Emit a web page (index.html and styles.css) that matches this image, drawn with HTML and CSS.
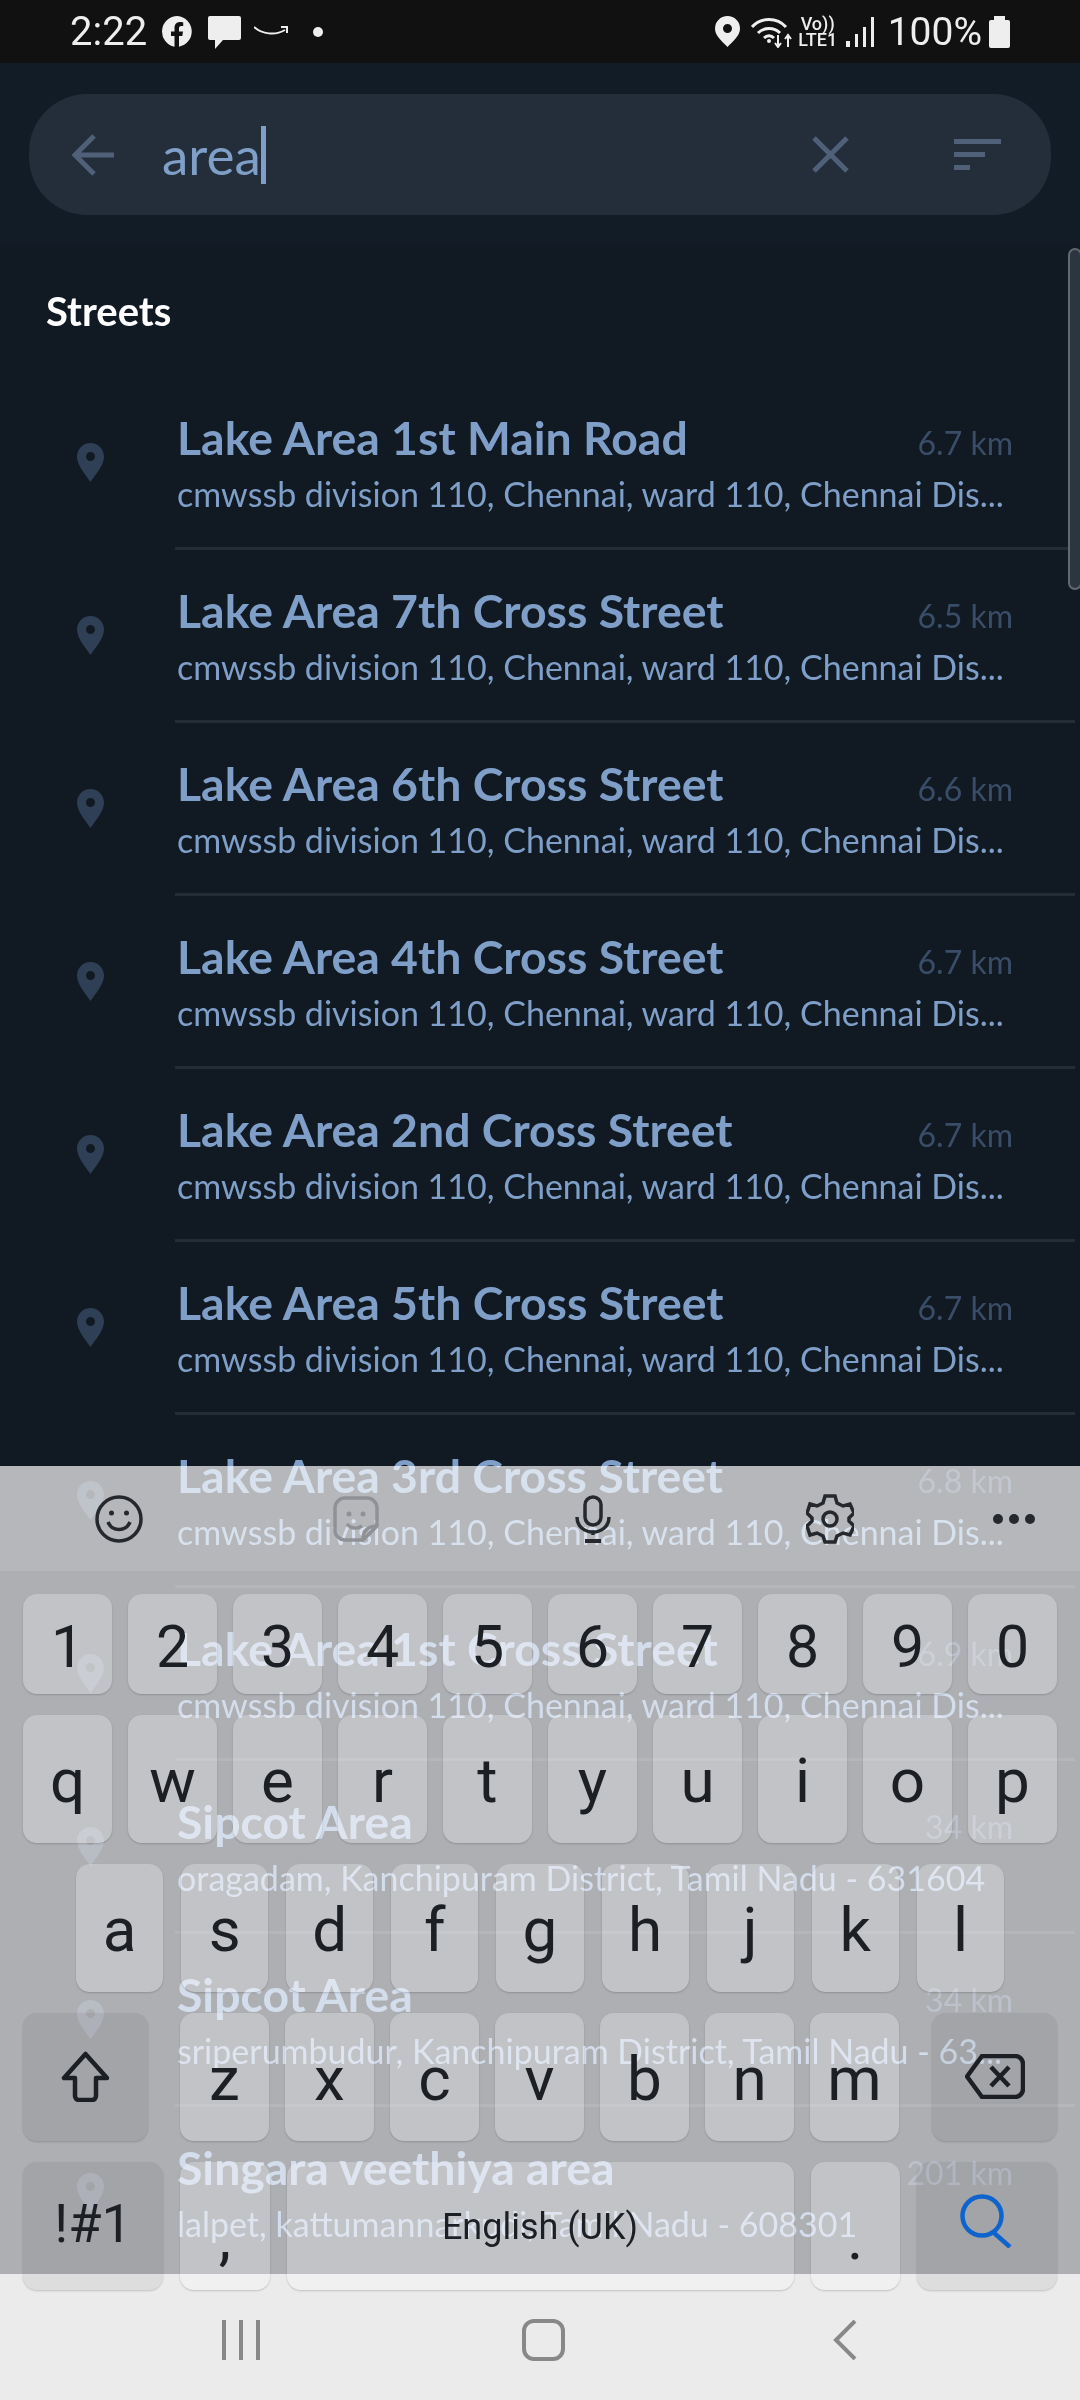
FILE: index.html
```html
<!DOCTYPE html>
<html lang="en">
<head>
    <meta charset="UTF-8">
    <meta name="viewport" content="width=device-width, initial-scale=1.0">
    <title>Search</title>
    <link rel="stylesheet" href="styles.css">
</head>
<body>

<svg class="defs" width="0" height="0">
    <symbol id="pin" viewBox="0 0 27 39">
        <path fill-rule="evenodd" d="M13.5 0C6 0 0 6 0 13.5 0 22 8 31 13.5 39 19 31 27 22 27 13.5 27 6 21 0 13.5 0zm0 9a4.5 4.5 0 1 1 0 9 4.5 4.5 0 0 1 0-9z"/>
    </symbol>
</svg>

<div class="phone">
    <div class="status">
        <div class="status-left">
            <span class="time">2:22</span>
            <svg class="ic-fb" width="31" height="31" viewBox="0 0 31 31"><path fill="#eee" d="M15.5 0a15.5 15.5 0 0 0-3 30.7V20H9v-4.500h3.500V12c0-4 2.300-6 5.700-6 1.500 0 3 .3 3 .3v3.700h-1.800c-1.900 0-2.400 1.100-2.400 2.300v3.200h4l-.7 4.500h-3.300v10.700A15.500 15.500 0 0 0 15.500 0z"/></svg>
            <svg class="ic-msg" width="33" height="33" viewBox="0 0 33 33"><path fill="#eee" d="M2 0h29a2 2 0 0 1 2 2v20a2 2 0 0 1-2 2H15l-8 9v-9H2a2 2 0 0 1-2-2V2a2 2 0 0 1 2-2z"/></svg>
            <svg class="ic-smile" width="35" height="12" viewBox="0 0 35 12"><path fill="none" stroke="#eee" stroke-width="2" d="M0 2c8 7 21 9 31 3"/><path fill="none" stroke="#eee" stroke-width="2" d="M27 2h6v6"/></svg>
            <span class="dot"></span>
        </div>
        <div class="status-right">
            <svg class="ic-loc" width="25" height="31" viewBox="0 0 25 31"><path fill="#eee" fill-rule="evenodd" d="M12.500 0C5.500 0 0 5.500 0 12.500 0 20 7 25 12.500 31 18 25 25 20 25 12.500 25 5.500 19.500 0 12.500 0zm0 8a4.500 4.500 0 1 1 0 9 4.500 4.500 0 0 1 0-9z"/></svg>
            <svg class="ic-wifi" width="42" height="32" viewBox="0 0 42 32" fill="none" stroke="#eee" stroke-width="3"><path d="M1 11C10 1 26 1 35 11"/><path d="M7 17c6-6 16-6 22 0"/><path d="M13 22c3-3 7-3 10 0"/><circle cx="18" cy="25" r="2" fill="#eee" stroke="none"/><path stroke-width="2" d="M27 19v11M24 27l3 4 3-4M37 31V20M34 23l3-4 3 4"/></svg>
            <div class="volte"><span>Vo))</span><span>LTE1</span></div>
            <div class="signal"><i></i><i></i><i></i><i></i></div>
            <span class="batt-text">100%</span>
            <div class="battery"></div>
        </div>
    </div>

    <div class="main">
        <div class="top">
            <div class="search">
                <svg class="ic-back" width="42" height="42" viewBox="0 0 42 42" fill="none" stroke="#4f6078" stroke-width="5"><path d="M22 2L3 21l19 19M3 21h39"/></svg>
                <div class="query">area<span class="caret"></span></div>
                <svg class="ic-x" width="37" height="37" viewBox="0 0 37 37" fill="none" stroke="#4f6078" stroke-width="5"><path d="M2 2l33 33M35 2L2 35"/></svg>
                <div class="filter"><i></i><i></i><i></i></div>
            </div>
        </div>

        <div class="results">
            <h2>Streets</h2>
            <div class="scroll-thumb"></div>

            <div class="row">
                <svg class="pin"><use href="#pin"/></svg>
                <div class="row-body">
                    <div class="row-top"><span class="name">Lake Area 1st Main Road</span><span class="dist">6.7 km</span></div>
                    <div class="addr">cmwssb division 110, Chennai, ward 110, Chennai Dis...</div>
                </div>
            </div>
            <div class="row">
                <svg class="pin"><use href="#pin"/></svg>
                <div class="row-body">
                    <div class="row-top"><span class="name">Lake Area 7th Cross Street</span><span class="dist">6.5 km</span></div>
                    <div class="addr">cmwssb division 110, Chennai, ward 110, Chennai Dis...</div>
                </div>
            </div>
            <div class="row">
                <svg class="pin"><use href="#pin"/></svg>
                <div class="row-body">
                    <div class="row-top"><span class="name">Lake Area 6th Cross Street</span><span class="dist">6.6 km</span></div>
                    <div class="addr">cmwssb division 110, Chennai, ward 110, Chennai Dis...</div>
                </div>
            </div>
            <div class="row">
                <svg class="pin"><use href="#pin"/></svg>
                <div class="row-body">
                    <div class="row-top"><span class="name">Lake Area 4th Cross Street</span><span class="dist">6.7 km</span></div>
                    <div class="addr">cmwssb division 110, Chennai, ward 110, Chennai Dis...</div>
                </div>
            </div>
            <div class="row">
                <svg class="pin"><use href="#pin"/></svg>
                <div class="row-body">
                    <div class="row-top"><span class="name">Lake Area 2nd Cross Street</span><span class="dist">6.7 km</span></div>
                    <div class="addr">cmwssb division 110, Chennai, ward 110, Chennai Dis...</div>
                </div>
            </div>
            <div class="row">
                <svg class="pin"><use href="#pin"/></svg>
                <div class="row-body">
                    <div class="row-top"><span class="name">Lake Area 5th Cross Street</span><span class="dist">6.7 km</span></div>
                    <div class="addr">cmwssb division 110, Chennai, ward 110, Chennai Dis...</div>
                </div>
            </div>
            <div class="row">
                <svg class="pin"><use href="#pin"/></svg>
                <div class="row-body">
                    <div class="row-top"><span class="name">Lake Area 3rd Cross Street</span><span class="dist">6.8 km</span></div>
                    <div class="addr">cmwssb division 110, Chennai, ward 110, Chennai Dis...</div>
                </div>
            </div>
            <div class="row">
                <svg class="pin"><use href="#pin"/></svg>
                <div class="row-body">
                    <div class="row-top"><span class="name">Lake Area 1st Cross Street</span><span class="dist">6.9 km</span></div>
                    <div class="addr">cmwssb division 110, Chennai, ward 110, Chennai Dis...</div>
                </div>
            </div>
            <div class="row">
                <svg class="pin"><use href="#pin"/></svg>
                <div class="row-body">
                    <div class="row-top"><span class="name">Sipcot Area</span><span class="dist">34 km</span></div>
                    <div class="addr">oragadam, Kanchipuram District, Tamil Nadu - 631604</div>
                </div>
            </div>
            <div class="row">
                <svg class="pin"><use href="#pin"/></svg>
                <div class="row-body">
                    <div class="row-top"><span class="name">Sipcot Area</span><span class="dist">34 km</span></div>
                    <div class="addr">sriperumbudur, Kanchipuram District, Tamil Nadu - 63...</div>
                </div>
            </div>
            <div class="row">
                <svg class="pin"><use href="#pin"/></svg>
                <div class="row-body">
                    <div class="row-top"><span class="name">Singara veethiya area</span><span class="dist">201 km</span></div>
                    <div class="addr">lalpet, kattumannarkudi, Tamil Nadu - 608301</div>
                </div>
            </div>
        </div>
    </div>

    <div class="navbar">
        <div class="nav-recent"><i></i><i></i><i></i></div>
        <div class="nav-home"></div>
        <svg class="nav-back" width="24" height="40" viewBox="0 0 24 40" fill="none" stroke="#888" stroke-width="4"><path d="M22 1L3 20l19 19"/></svg>
    </div>

    <!-- keyboard sits on top of the list, the list shows through it -->
    <div class="keyboard">
        <div class="kb-bg"></div>
        <div class="kb-tools">
            <svg width="48" height="48" viewBox="0 0 48 48" fill="none" stroke="#25282c" stroke-width="3.500"><circle cx="24" cy="24" r="22"/><path d="M13 27c4 10 18 10 22 0"/><circle cx="16.500" cy="18" r="2.500" fill="#25282c" stroke="none"/><circle cx="31.500" cy="18" r="2.500" fill="#25282c" stroke="none"/></svg>
            <svg width="46" height="46" viewBox="0 0 46 46" fill="none" stroke="#8f9196" stroke-width="3.500"><path d="M12 2h22a10 10 0 0 1 10 10v18L30 44H12A10 10 0 0 1 2 34V12A10 10 0 0 1 12 2z"/><path d="M14 28c4 5 10 5 15 2M30 44c0-8 4-14 14-14"/><circle cx="16" cy="18" r="2.500" fill="#8f9196" stroke="none"/><circle cx="30" cy="18" r="2.500" fill="#8f9196" stroke="none"/></svg>
            <svg width="36" height="48" viewBox="0 0 36 48" fill="none" stroke="#25282c" stroke-width="3.500"><rect x="10" y="2" width="16" height="28" rx="8"/><path d="M2 22c0 20 32 20 32 0M18 37v3"/><path stroke-width="4" d="M10 46h16"/></svg>
            <svg width="48" height="50" viewBox="0 0 48 50" fill="none" stroke="#25282c" stroke-width="3.500"><path d="M19 2h10l2 7 6 3 7-2 4 9-5 5v3l5 5-4 9-7-2-6 3-2 6H19l-2-6-6-3-7 2-3-9 5-5v-3l-5-5 3-9 7 2 6-3z"/><circle cx="24" cy="25" r="7"/></svg>
            <div class="dots"><i></i><i></i><i></i></div>
        </div>

        <div class="kb-rows">
            <div class="kb-row row-num">
                <div class="key">1</div><div class="key">2</div><div class="key">3</div><div class="key">4</div><div class="key">5</div><div class="key">6</div><div class="key">7</div><div class="key">8</div><div class="key">9</div><div class="key">0</div>
            </div>
            <div class="kb-row">
                <div class="key">q</div><div class="key">w</div><div class="key">e</div><div class="key">r</div><div class="key">t</div><div class="key">y</div><div class="key">u</div><div class="key">i</div><div class="key">o</div><div class="key">p</div>
            </div>
            <div class="kb-row row-home">
                <div class="key">a</div><div class="key">s</div><div class="key">d</div><div class="key">f</div><div class="key">g</div><div class="key">h</div><div class="key">j</div><div class="key">k</div><div class="key">l</div>
            </div>
            <div class="kb-row">
                <div class="key fn shift">
                    <svg width="49" height="51" viewBox="0 0 49 51" fill="none" stroke="#1c1f24" stroke-width="4.500"><path d="M24.500 3L3 27h11v18a4 4 0 0 0 4 4h13a4 4 0 0 0 4-4V27h11z" stroke-linejoin="round"/></svg>
                </div>
                <div class="key">z</div><div class="key">x</div><div class="key">c</div><div class="key">v</div><div class="key">b</div><div class="key">n</div><div class="key">m</div>
                <div class="key fn del">
                    <svg width="60" height="45" viewBox="0 0 60 45" fill="none" stroke="#1c1f24" stroke-width="4.500"><path d="M17 2h33a8 8 0 0 1 8 8v25a8 8 0 0 1-8 8H17L2 22.500z" stroke-linejoin="round"/><path d="M26 13l18 19M44 13L26 32"/></svg>
                </div>
            </div>
            <div class="kb-row row-bottom">
                <div class="key fn sym">!#1</div>
                <div class="key low">,</div>
                <div class="key space">English (UK)</div>
                <div class="key low">.</div>
                <div class="key fn go">
                    <svg width="54" height="54" viewBox="0 0 54 54" fill="none" stroke="#0f63cc" stroke-width="4.500"><circle cx="22" cy="22" r="19.500"/><path d="M33 38l17 15"/></svg>
                </div>
            </div>
        </div>
    </div>
</div>

</body>
</html>
```

FILE: styles.css
```css
* {
    box-sizing: border-box;
}

body {
    margin: 0;
    background-color: #111a23;
    font-family: 'Lato', sans-serif;
}

.defs {
    position: absolute;
}

.phone {
    position: relative;
    width: 1080px;
    height: 2400px;
    display: flex;
    flex-direction: column;
    overflow: hidden;
}

/* status bar */
.status {
    height: 63px;
    flex: none;
    background-color: #111;
    color: #eee;
    display: flex;
    align-items: center;
    justify-content: space-between;
    padding: 0 70px;
    font-family: 'Roboto', sans-serif;
    font-size: 40px;
}

.status-left, .status-right {
    display: flex;
    align-items: center;
}

.time {
    width: 92px;
}

.ic-msg {
    margin-left: 15px;
    margin-top: 1px;
}

.ic-smile {
    margin-left: 13px;
    margin-top: -2px;
}

.dot {
    width: 10px;
    height: 10px;
    border-radius: 50%;
    background-color: #eee;
    margin-left: 24px;
}

.ic-wifi {
    margin-left: 11px;
}

.volte {
    width: 40px;
    margin-left: 5px;
    display: flex;
    flex-direction: column;
    align-items: center;
    font-size: 18px;
    font-weight: 500;
    line-height: 16px;
}

.signal {
    display: flex;
    align-items: flex-end;
    gap: 5px;
    height: 30px;
    margin-left: 8px;
}

.signal i {
    display: block;
    width: 3px;
    background-color: #eee;
}

.signal i:nth-child(1) { height: 6px; width: 4px; }
.signal i:nth-child(2) { height: 13px; }
.signal i:nth-child(3) { height: 20px; }
.signal i:nth-child(4) { height: 30px; }

.batt-text {
    margin-left: 14px;
    font-size: 39px;
}

.battery {
    position: relative;
    width: 21px;
    height: 28px;
    margin-left: 7px;
    margin-top: 4px;
    background-color: #eee;
    border-radius: 2px;
}

.battery::before {
    content: '';
    position: absolute;
    top: -4px;
    left: 5px;
    width: 11px;
    height: 4px;
    background-color: #eee;
}

/* search + list */
.main {
    flex: 1;
    min-height: 0;
    overflow: hidden;
}

.top {
    height: 182px;
    background-color: #121c26;
    padding: 31px 29px 0;
}

.search {
    height: 121px;
    border-radius: 58px;
    background-color: #232e3a;
    display: flex;
    align-items: center;
    padding: 0 50px 0 43px;
}

.ic-back {
    flex: none;
}

.query {
    flex: 1;
    display: flex;
    align-items: center;
    margin-left: 48px;
    font-size: 53px;
    color: #7f9fc8;
}

.caret {
    width: 5px;
    height: 58px;
    margin-left: 0;
    background-color: #7f9fc8;
}

.ic-x {
    flex: none;
    margin-right: 105px;
}

.filter {
    width: 47px;
    display: flex;
    flex-direction: column;
    gap: 8px;
}

.filter i {
    display: block;
    height: 5px;
    background-color: #4f6078;
}

.filter i:nth-child(2) { width: 31px; }
.filter i:nth-child(3) { width: 16px; }

.results {
    position: relative;
    padding-top: 45px;
}

.results h2 {
    margin: 0 0 45px 46px;
    color: #fff;
    font-size: 40px;
    font-weight: 700;
    line-height: 42px;
}

.scroll-thumb {
    position: absolute;
    top: 3px;
    right: -2px;
    width: 14px;
    height: 342px;
    border-radius: 8px;
    background-color: #2c3641;
    border: 2px solid #606870;
}

.row {
    height: 173px;
    display: flex;
    align-items: center;
    padding-left: 77px;
}

.pin {
    width: 27px;
    height: 39px;
    flex: none;
    margin-top: -2px;
    fill: #2f3f55;
}

.row-body {
    flex: 1;
    min-width: 0;
    height: 173px;
    margin: 0 5px 0 71px;
    padding: 32px 62px 0 2px;
    border-bottom: 3px solid #232d38;
}

.row-top {
    display: flex;
    align-items: baseline;
    justify-content: space-between;
}

.name {
    font-size: 46.4px;
    font-weight: 700;
    line-height: 56px;
    color: #7f9fc8;
}

.dist {
    font-size: 32px;
    color: #3a4d68;
}

.addr {
    margin-top: 7px;
    font-size: 34px;
    line-height: 44px;
    color: #7f9fc8;
    white-space: nowrap;
}

/* nav bar */
.navbar {
    height: 126px;
    flex: none;
    background-color: #ebebeb;
    position: relative;
}

.nav-recent {
    position: absolute;
    left: 222px;
    top: 46px;
    width: 38px;
    height: 40px;
    display: flex;
    justify-content: space-between;
}

.nav-recent i {
    display: block;
    width: 4px;
    background-color: #888;
}

.nav-home {
    position: absolute;
    left: 522px;
    top: 45px;
    width: 43px;
    height: 42px;
    border: 4px solid #888;
    border-radius: 12px;
}

.nav-back {
    position: absolute;
    left: 833px;
    top: 46px;
}

/* keyboard overlay */
.keyboard {
    position: absolute;
    top: 1466px;
    left: 0;
    width: 1080px;
}

.kb-bg {
    position: absolute;
    top: 105px;
    left: 0;
    width: 100%;
    height: 703px;
    background-color: #a8a6a7;
    mix-blend-mode: screen;
}

.kb-tools {
    position: relative;
    height: 105px;
    display: grid;
    grid-template-columns: repeat(4, 237px) 1fr;
    justify-items: center;
    align-items: center;
}

/* lighter strip of the toolbar */
.kb-tools::before {
    content: '';
    position: absolute;
    top: 0;
    left: 0;
    width: 100%;
    height: 100%;
    background-color: #b1afaf;
    mix-blend-mode: screen;
}

.kb-tools svg, .dots {
    position: relative;
}

.dots {
    display: flex;
    gap: 6px;
}

.dots i {
    display: block;
    width: 10px;
    height: 10px;
    border-radius: 50%;
    background-color: #25282c;
}

.kb-rows {
    position: relative;
    padding: 23px 23px 0;
    display: flex;
    flex-direction: column;
    gap: 21px;
    font-family: 'Roboto', sans-serif;
    font-size: 62px;
    color: #1c1f24;
}

.kb-row {
    height: 128px;
    display: flex;
    gap: 16px;
}

.row-num {
    height: 100px;
    font-size: 59px;
}

.row-home {
    padding: 0 53px;
    gap: 18px;
}

.row-bottom {
    gap: 17px;
}

.key {
    flex: 1;
    min-width: 0;
    display: flex;
    align-items: center;
    justify-content: center;
    padding-top: 2px;
    border-radius: 14px;
    background-color: rgba(255, 255, 255, 0.25);
    box-shadow: 0 1px 2px rgba(0, 0, 0, 0.18);
}

.row-num .key {
    padding-top: 5px;
}

.fn {
    background-color: rgba(0, 0, 0, 0.06);
    padding-top: 0;
}

.shift, .del {
    flex: none;
    width: 125px;
    padding-bottom: 2px;
}

.shift {
    margin-right: 16px;
}

.del {
    margin-left: 17px;
}

.sym, .go {
    flex: none;
    width: 140px;
}

.go {
    padding-bottom: 10px;
}

.sym {
    font-size: 54px;
    padding-bottom: 6px;
}

.space {
    flex: none;
    width: 507px;
    font-size: 36px;
    padding-top: 2px;
    padding-bottom: 0;
}

.low {
    padding-top: 22px;
}
```
